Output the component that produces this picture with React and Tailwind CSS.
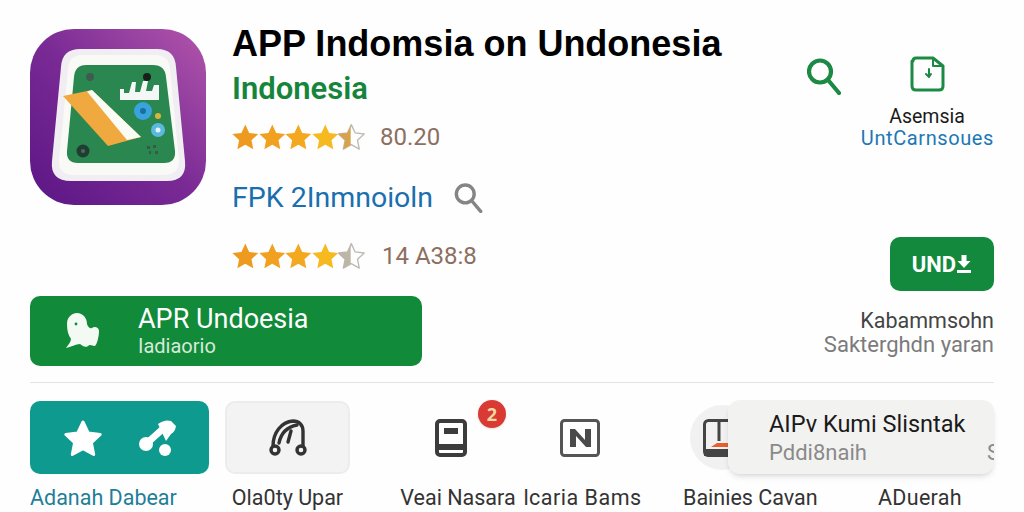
import React from 'react';

const sans = "font-['Liberation_Sans',Arial,sans-serif]";
const roboto = "font-['Roboto','Liberation_Sans',sans-serif]";

const STAR = 'M12 1.500l3.200 6.900 7.500.9-5.600 5.100 1.500 7.400L12 18.100l-6.600 3.700 1.500-7.400-5.600-5.100 7.500-.9z';

function Star({ color }) {
  return (
    <svg viewBox="1 1 22 22" className="w-[26.6px] h-[26.6px] shrink-0">
      <path d={STAR} fill={color} />
    </svg>
  );
}

function HalfStar({ id, color }) {
  return (
    <svg viewBox="1 1 22 22" className="w-[26.6px] h-[26.6px] shrink-0">
      <defs>
        <clipPath id={id}>
          <rect x="0" y="0" width="11.500" height="24" />
        </clipPath>
      </defs>
      <path d={STAR} fill="#fff" stroke="#bdbab2" strokeWidth="1.100" strokeLinejoin="round" />
      <path d={STAR} fill={color} clipPath={`url(#${id})`} />
    </svg>
  );
}

function Stars({ id, half }) {
  return (
    <div className="flex">
      <Star color="#ee9a1e" />
      <Star color="#f1a01f" />
      <Star color="#f3a820" />
      <Star color="#f6b91f" />
      <HalfStar id={id} color={half} />
    </div>
  );
}

function SearchGlyph({ className }) {
  return (
    <svg viewBox="0 0 34 37" className={className} fill="none" stroke="currentColor" strokeWidth="4.200" strokeLinecap="round">
      <circle cx="13" cy="13.500" r="11" />
      <path d="M21.500 22.500L32 35" />
    </svg>
  );
}

function AppIcon() {
  return (
    <div className="w-[176px] h-[176px] shrink-0 rounded-[44px] bg-gradient-to-tr from-[#5b1585] via-[#7a2a95] to-[#b355ab] overflow-hidden">
      <svg viewBox="0 0 176 176" className="w-full h-full">
        <path d="M50 20H127Q145 20 146 38L155 132Q157 152 137 152H41Q20 152 22 132L31 38Q32 20 50 20Z" fill="#f0edf3" />
        <path d="M52 26H125Q139 26 140 40L149 130Q150 146 134 146H44Q28 146 29 130L38 40Q39 26 52 26Z" fill="#f9f9f6" />
        <path d="M56 36H123Q135 36 136 48L145 122Q146 134 134 134H48Q36 134 37 122L44 48Q45 36 56 36Z" fill="#2a8750" />
        <path d="M33 67L62 61L111 108L78 117Z" fill="#f0a93f" />
        <path d="M57 62.500L62 61L111 108L97 111Z" fill="#fbfbf6" />
        <path d="M90 60H94V64H99L102 53L106 53L105 63H110L113 52L118 52L116 62H122L124 56H129V71H90Z" fill="#f4f7f5" />
        <circle cx="113" cy="82" r="9" fill="#38a3dd" />
        <circle cx="113" cy="82" r="3" fill="#1b6f9d" />
        <circle cx="128" cy="101" r="7" fill="#5cb8df" />
        <circle cx="128" cy="101" r="2.500" fill="#e5f3f8" />
        <circle cx="128" cy="87" r="3" fill="#d9b33b" />
        <circle cx="60" cy="48" r="4" fill="#3d5c4d" />
        <circle cx="117" cy="48" r="4" fill="#18201c" />
        <circle cx="53" cy="122" r="6.500" fill="#1f3d30" />
        <circle cx="53" cy="122" r="2" fill="#4e6a5c" />
        <path d="M117 117h3v3h-3zM123 116h3v3h-3zM119 122h2v3h-2zM125 122h3v3h-3z" fill="#385b49" />
      </svg>
    </div>
  );
}

function TopMiddle() {
  return (
    <div className="flex flex-col">
      <div className={`h-[40px] flex items-center whitespace-nowrap text-[36px] font-bold text-black ${sans}`}>
        APP Indomsia on Undonesia
      </div>
      <div className={`h-[50px] flex items-center text-[31px] font-semibold text-[#16853c] ${roboto}`}>Indonesia</div>
      <div className="h-[46px] flex items-center">
        <Stars id="half-a" half="#d8a24a" />
        <span className={`ml-[15px] text-[24px] text-[#8c6f60] ${roboto}`}>80.20</span>
      </div>
      <div className="h-[76px] flex items-center">
        <span className={`text-[28.500px] text-[#1a6fae] ${roboto}`}>FPK 2Inmnoioln</span>
        <SearchGlyph className="ml-[21px] w-[29px] h-[30px] text-[#858585]" />
      </div>
      <div className="h-[40px] flex items-center">
        <Stars id="half-b" half="#bdb5a5" />
        <span className={`ml-[17px] text-[24px] text-[#8c6f60] ${roboto}`}>14 A38:8</span>
      </div>
    </div>
  );
}

function TopRight() {
  return (
    <div className="w-[187px] flex flex-col items-end">
      <div className="w-full flex pt-[33px]">
        <SearchGlyph className="w-[34px] h-[37px] mt-[1px] text-[#1c8a45]" />
        <div className="flex-1 flex justify-center">
          <svg viewBox="0 0 38 38" className="w-[38px] h-[38px] -mt-[2px] ml-[18px] text-[#1c8a45]" fill="none" stroke="currentColor" strokeWidth="3" strokeLinejoin="round" strokeLinecap="round">
            <path d="M5 6Q5 3 8 3H25L35 11V31Q35 35 31 35H8Q4 35 4 31V6" />
            <path d="M25 3V11H35" strokeWidth="2" />
            <path d="M21 14V20M18 19L21 22L23 19" strokeWidth="2" />
          </svg>
        </div>
      </div>
      <div className={`w-[134px] mt-[11px] text-center text-[19.500px] leading-[22px] text-[#1a1a1a] ${roboto}`}>Asemsia</div>
      <div className={`w-[134px] text-right whitespace-nowrap text-[20px] tracking-[0.6px] leading-[20px] text-[#1c78b4] ${roboto}`}>UntCarnsoues</div>
      <button className={`mt-[89px] w-[104px] h-[54px] rounded-[10px] bg-[#12893c] text-white flex items-center justify-center text-[22px] font-bold ${roboto}`}>
        UND
        <svg viewBox="0 0 16 20" className="w-[16px] h-[20px]" fill="currentColor">
          <path d="M5.500 1h5v6h4l-6.500 7L1.500 7h4zM1 16h14v3H1z" />
        </svg>
      </button>
      <div className={`mt-[18px] text-[21.500px] leading-[24px] text-[#444] whitespace-nowrap ${roboto}`}>Kabammsohn</div>
      <div className={`text-[22px] leading-[24px] text-[#7b7b7b] whitespace-nowrap ${roboto}`}>Sakterghdn yaran</div>
    </div>
  );
}

function GreenBar() {
  return (
    <div className="mt-[20px] w-[392px] h-[70px] rounded-[10px] bg-[#118a39] flex items-center text-white">
      <svg viewBox="0 0 34 36" className="ml-[36px] w-[34px] h-[36px]" fill="#f3faf4">
        <path d="M1 11C1 4 6 0 11 0C17 0 21 5 21 11C22 14 24 16 26 15C28 13 33 14 33 18C33 24 31 31 29 33C26 33 24 31 22 33C19 35 17 33 14 31C10 31 5 34 0 35C2 32 5 29 5 26C2 22 1 17 1 11Z" />
        <circle cx="10" cy="11" r="1.400" fill="#118a39" />
      </svg>
      <div className={`ml-[38px] flex flex-col ${roboto}`}>
        <span className="text-[27px] leading-[31px]">APR Undoesia</span>
        <span className="text-[20px] leading-[23px] text-[#d6eadb]">Iadiaorio</span>
      </div>
    </div>
  );
}

function Label({ className, children }) {
  return (
    <div className={`mt-[12px] text-[21.500px] leading-[24px] whitespace-nowrap ${roboto} ${className}`}>{children}</div>
  );
}

function BottomRow() {
  return (
    <div className="relative flex mt-[18px]">
      <div className="w-[179px] flex flex-col items-start">
        <div className="w-full h-[73px] rounded-[10px] bg-[#0f9a90] flex items-center justify-center gap-[35px]">
          <svg viewBox="0 0 40 38" className="w-[40px] h-[38px]" fill="#fff" stroke="#fff" strokeWidth="3" strokeLinejoin="round">
            <path d="M20 3l5.200 11 12 1.500-8.800 8.200 2.300 11.800L20 29.700 9.300 35.500l2.300-11.800L2.800 15.500l12-1.500z" />
          </svg>
          <svg viewBox="0 0 38 38" className="w-[38px] h-[38px]" fill="#fff">
            <circle cx="8" cy="25" r="7" />
            <path d="M8 25L27 8" stroke="#fff" strokeWidth="7" />
            <path d="M20 5Q27 0 33 2L38 7Q37 13 33 15L28 22Z" />
            <circle cx="27" cy="31" r="6" />
          </svg>
        </div>
        <Label className="text-[#1f7f98]">Adanah Dabear</Label>
      </div>
      <div className="ml-[16px] w-[125px] flex flex-col items-center">
        <div className="w-full h-[73px] rounded-[10px] bg-[#f3f3f3] border-2 border-[#ececec] flex items-center justify-center">
          <svg viewBox="0 0 38 38" className="w-[38px] h-[38px]" fill="none" stroke="#333" strokeWidth="3.400" strokeLinecap="round">
            <path d="M4 27C4 14 12 3 24 2C30 2 34 6 34 12V27" />
            <path d="M10 24C12 14 18 8 28 6" />
            <path d="M22 12L19 23" />
            <circle cx="6" cy="31" r="4" />
            <circle cx="32" cy="31" r="4" />
          </svg>
        </div>
        <Label className="text-[#333]">Ola0ty Upar</Label>
      </div>
      <div className="ml-[40px] w-[122px] flex flex-col items-center relative">
        <div className="h-[73px] flex items-center">
          <svg viewBox="0 0 32 38" className="w-[32px] h-[38px]">
            <rect x="2" y="2" width="28" height="34" rx="3" fill="none" stroke="#3c3c3c" strokeWidth="4" />
            <rect x="9" y="9" width="14" height="6" fill="#3c3c3c" />
            <rect x="1" y="25" width="30" height="6" fill="#3c3c3c" />
          </svg>
        </div>
        <span className="absolute left-[88px] top-[-1px] w-[28px] h-[28px] rounded-full bg-[#d93a33] shadow flex items-center justify-center text-[18px] font-bold text-[#f7d9a0]">2</span>
        <Label className="text-[#333] ml-[14px]">Veai Nasara</Label>
      </div>
      <div className="ml-[7px] w-[122px] flex flex-col items-center">
        <div className="h-[73px] flex items-center">
          <svg viewBox="0 0 40 38" className="w-[40px] h-[38px]">
            <rect x="1.500" y="1.500" width="37" height="35" rx="3" fill="none" stroke="#555" strokeWidth="3" />
            <path d="M10 10H15L25 21V10H31V28H26L16 17V28H10Z" fill="#4a4a4a" />
          </svg>
        </div>
        <Label className="text-[#333] tracking-[0.5px] ml-[5px]">lcaria Bams</Label>
      </div>
      <div className="ml-[42px] w-[133px] flex flex-col">
        <div className="h-[73px] flex items-center">
          <div className="ml-[7px] w-[65px] h-[65px] rounded-full bg-[#f1f1f1] flex items-center pl-[13px]">
            <svg viewBox="0 0 26 38" className="w-[26px] h-[38px]">
              <rect x="1.500" y="1.500" width="30" height="35" rx="4" fill="none" stroke="#444" strokeWidth="3" />
              <path d="M16 0V22" stroke="#444" strokeWidth="3" />
              <path d="M8 28L14 24H26V28Z" fill="#e4602e" />
              <path d="M1 30H26V37H1Z" fill="#444" />
            </svg>
          </div>
        </div>
        <Label className="text-[#333] text-center">Bainies Cavan</Label>
      </div>
      <div className="ml-[62px] flex flex-col">
        <div className="h-[73px]" />
        <Label className="text-[#333] tracking-[0.3px]">ADuerah</Label>
      </div>
      <div className={`absolute right-0 top-[-1px] w-[266px] h-[74px] rounded-[12px] bg-[#f2f2f1] shadow-md overflow-hidden pl-[41px] pt-[9px] ${roboto}`}>
        <div className="text-[23.500px] leading-[30px] text-[#1a1a1a] whitespace-nowrap">AIPv Kumi Slisntak</div>
        <div className="flex justify-between text-[22px] leading-[28px] text-[#8a8a8a] whitespace-nowrap">
          <span>Pddi8naih</span>
          <span className="-mr-[6px]">S</span>
        </div>
      </div>
    </div>
  );
}

export default function App() {
  return (
    <div className="w-[1024px] h-[512px] bg-[#fefefe] overflow-hidden px-[30px] pt-[24px]">
      <div className="flex justify-between">
        <div className="flex flex-col">
          <div className="flex gap-[26px]">
            <div className="pt-[5px]">
              <AppIcon />
            </div>
            <TopMiddle />
          </div>
          <GreenBar />
        </div>
        <TopRight />
      </div>
      <div className="mt-[16px] h-px bg-[#e4e4e4]" />
      <BottomRow />
    </div>
  );
}
